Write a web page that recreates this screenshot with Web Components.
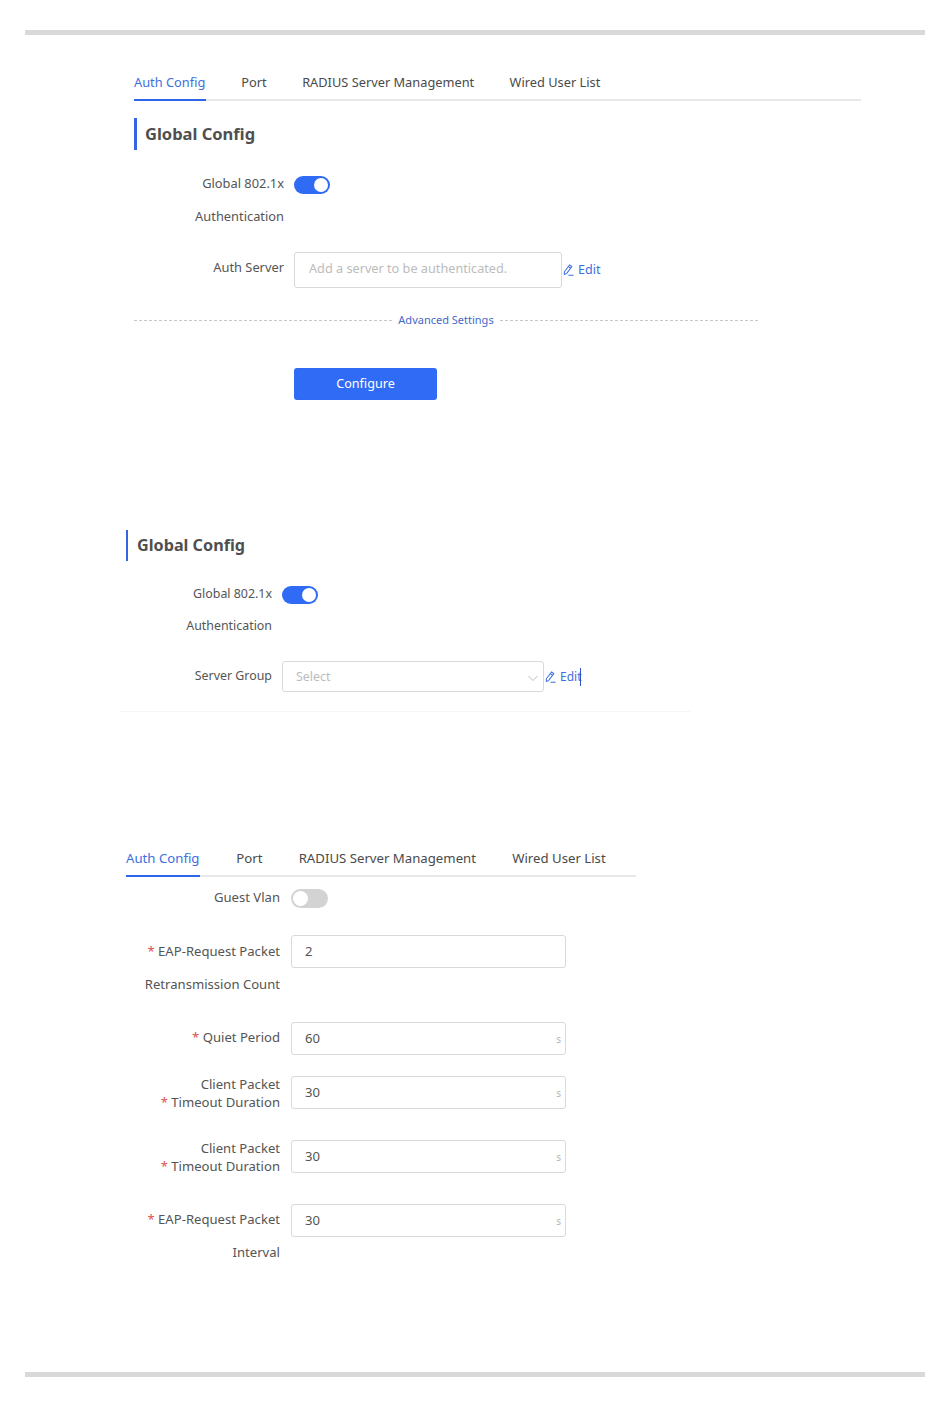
<!DOCTYPE html>
<html>
<head>
<meta charset="utf-8">
<title>802.1x</title>
<style>
  html, body { margin: 0; padding: 0; background: #fff; }
  body {
    width: 950px; height: 1408px; overflow: hidden;
    font-family: "Noto Sans", "Liberation Sans", sans-serif;
    color: #555;
    display: flex; flex-direction: column;
  }
  .first { margin: 33px 89px 0 134px; --fs: 12.85px; --lh: 33px; }
  .second { margin: 130px 0 0 126px; width: 564px; --fs: 12.4px; --lh: 31.5px; }
  .third { margin: 131px 314px 0 126px; --fs: 13.1px; --lh: 33px; }
  .spacer { flex: 1; }
  i { font-style: normal; color: #d9534f; }
</style>
</head>
<body>
<page-rule style="margin-top:30px"></page-rule>

<section class="first">
  <tab-bar><tab-item active>Auth Config</tab-item><tab-item>Port</tab-item><tab-item>RADIUS Server Management</tab-item><tab-item>Wired User List</tab-item></tab-bar>
  <section-title style="margin-top:17px">Global Config</section-title>
  <form-row label-width="150" style="margin-top:17px"><span slot="label">Global 802.1x<br>Authentication</span><toggle-switch on style="margin-top:3px"></toggle-switch></form-row>
  <form-row label-width="150" style="margin-top:19px" centered>
    <span slot="label" style="margin-top:-5px">Auth Server</span>
    <text-box width="268" height="36" placeholder style="padding-bottom:3px;font-size:12.7px">Add a server to be authenticated.</text-box>
    <edit-link style="font-size:12.6px"></edit-link>
  </form-row>
  <fold-divider style="margin-top:23px">Advanced Settings</fold-divider>
  <action-button style="margin:39px 0 0 160px">Configure</action-button>
</section>

<section class="second">
  <section-title bar="2">Global Config</section-title>
  <form-row label-width="146" style="margin-top:17px"><span slot="label">Global 802.1x<br>Authentication</span><toggle-switch on style="margin-top:3px"></toggle-switch></form-row>
  <form-row label-width="146" style="margin-top:20px" centered>
    <span slot="label" style="margin-top:-2px">Server Group</span>
    <text-box width="262" height="31" placeholder chevron style="padding-left:13px;padding-top:2px">Select</text-box>
    <edit-link caret style="font-size:12px"></edit-link>
  </form-row>
  <hr-line style="margin-top:19px"></hr-line>
</section>

<section class="third">
  <tab-bar wide><tab-item active>Auth Config</tab-item><tab-item>Port</tab-item><tab-item>RADIUS Server Management</tab-item><tab-item>Wired User List</tab-item></tab-bar>
  <form-row label-width="154" gap="11" style="margin-top:4px"><span slot="label">Guest Vlan</span><toggle-switch large style="margin-top:2px"></toggle-switch></form-row>
  <form-row label-width="154" gap="11" style="margin-top:21px"><span slot="label"><i>*</i> EAP-Request Packet<br>Retransmission Count</span><text-box width="275" height="33" style="padding-left:13px">2</text-box></form-row>
  <form-row label-width="154" gap="11" style="margin-top:21px"><span slot="label" style="margin-top:-1px"><i>*</i> Quiet Period</span><text-box width="275" height="33" unit="s" style="padding-left:13px">60</text-box></form-row>
  <form-row label-width="154" gap="11" style="margin-top:21px" tight><span slot="label">Client Packet<br><i>*</i> Timeout Duration</span><text-box width="275" height="33" unit="s" style="padding-left:13px">30</text-box></form-row>
  <form-row label-width="154" gap="11" style="margin-top:29px" tight><span slot="label">Client Packet<br><i>*</i> Timeout Duration</span><text-box width="275" height="33" unit="s" style="padding-left:13px">30</text-box></form-row>
  <form-row label-width="154" gap="11" style="margin-top:29px"><span slot="label" style="margin-top:-1px"><i>*</i> EAP-Request Packet<br>Interval</span><text-box width="275" height="33" unit="s" style="padding-left:13px">30</text-box></form-row>
</section>

<div class="spacer"></div>
<page-rule style="margin-bottom:31px"></page-rule>

<script>
function shadow(el, html) {
  el.attachShadow({ mode: 'open' }).innerHTML = html;
}

class PageRule extends HTMLElement {
  constructor() {
    super();
    shadow(this, `<style>:host { display: block; height: 5px; margin-left: 25px; margin-right: 25px; background: #d9d9d9; }</style>`);
  }
}

class TabBar extends HTMLElement {
  constructor() {
    super();
    shadow(this, `<style>
      :host { display: flex; gap: 35.4px; border-bottom: 2px solid #e8e8ea; height: 31px; font-size: 12.8px; --tab-lh: 29px; }
      :host([wide]) { gap: 36.2px; font-size: 13.2px; height: 32px; --tab-lh: 30px; }
    </style><slot></slot>`);
  }
}

class TabItem extends HTMLElement {
  constructor() {
    super();
    shadow(this, `<style>
      :host { display: block; height: 100%; line-height: var(--tab-lh); margin-bottom: -2px; color: #4a4a4a; border-bottom: 2px solid transparent; white-space: nowrap; }
      :host([active]) { color: #3d6fe0; border-bottom-color: #2f66e8; padding-right: 0.7px; }
    </style><slot></slot>`);
  }
}

class SectionTitle extends HTMLElement {
  constructor() {
    super();
    shadow(this, `<style>
      :host { display: block; height: 32px; line-height: 32px; padding-left: 8px; border-left: 3px solid #3565e0; font-size: 16.5px; font-weight: 700; color: #4f4f4f; }
      :host([bar="2"]) { height: 31px; line-height: 31px; border-left-width: 2px; padding-left: 9px; font-size: 16.2px; }
    </style><slot></slot>`);
  }
}

class FormRow extends HTMLElement {
  constructor() {
    super();
    const w = this.getAttribute('label-width') || 150;
    const gap = this.getAttribute('gap') || 10;
    shadow(this, `<style>
      :host { display: flex; gap: ${gap}px; font-size: var(--fs, 13px); line-height: var(--lh, 32px); }
      :host([centered]) { align-items: center; }
      .label { width: ${w}px; flex: none; text-align: right; color: #555; }
      :host([tight]) .label { line-height: 18px; margin-top: -1px; }
      ::slotted(span) { display: block; }
      .control { display: flex; align-items: center; height: var(--lh, 32px); }
      :host([centered]) .control { height: auto; }
    </style>
    <div class="label"><slot name="label"></slot></div>
    <div class="control"><slot></slot></div>`);
  }
}

class ToggleSwitch extends HTMLElement {
  constructor() {
    super();
    shadow(this, `<style>
      :host { display: block; position: relative; width: 36px; height: 18px; border-radius: 9px; background: #d3d3d3; }
      :host([large]) { width: 37px; height: 19px; border-radius: 10px; }
      :host([on]) { background: #2f6bf5; }
      .knob { position: absolute; top: 2px; left: 2px; width: 14px; height: 14px; border-radius: 50%; background: #fff; }
      :host([large]) .knob { width: 15px; height: 15px; }
      :host([on]) .knob { left: 20px; }
    </style><div class="knob"></div>`);
  }
}

class TextBox extends HTMLElement {
  constructor() {
    super();
    const w = this.getAttribute('width');
    const h = this.getAttribute('height');
    const unit = this.getAttribute('unit');
    const chevron = this.hasAttribute('chevron')
      ? `<svg width="12" height="12" viewBox="0 0 12 12" fill="none" stroke="#bdbdbd" stroke-width="1"><path d="M1.5 4l4.5 4.5L10.5 4"/></svg>` : '';
    shadow(this, `<style>
      :host { display: flex; align-items: center; box-sizing: border-box; width: ${w}px; height: ${h}px; padding: 0 4px 0 14px; border: 1px solid #d9d9d9; border-radius: 3px; background: #fff; color: #555; line-height: 1; }
      :host([placeholder]) { color: #bcbcbc; }
      .text { flex: 1; }
      .unit { color: #b5b5b5; font-size: 10px; }
    </style><span class="text"><slot></slot></span>${unit ? `<span class="unit">${unit}</span>` : ''}${chevron}`);
  }
}

class EditLink extends HTMLElement {
  constructor() {
    super();
    shadow(this, `<style>
      :host { display: inline-flex; align-items: center; gap: 4px; margin-left: 1px; position: relative; color: #3d6fe0; line-height: 18px; }
      .caret { display: none; position: absolute; right: 0; top: 0; width: 1px; height: 18px; background: #2b56c8; }
      :host([caret]) .caret { display: block; }
    </style>
    <svg width="11" height="12" viewBox="0 0 11 12" fill="none" stroke="#3d6fe0" stroke-width="1.05"><path d="M6.6 1L8.8 2.6 3.8 9.4 1.4 10.4 1.3 7.8z"/><path d="M5.4 2.6L7.6 4.2M5.4 11.2h5.2"/></svg>
    <span>Edit</span><span class="caret"></span>`);
  }
}

class FoldDivider extends HTMLElement {
  constructor() {
    super();
    shadow(this, `<style>
      :host { display: flex; align-items: center; gap: 6px; width: 624px; height: 18px; color: #4469c9; font-size: 11px; line-height: 16px; white-space: nowrap; }
      i { flex: 1; border-top: 1px dashed #c8c8c8; }
    </style><i></i><slot></slot><i></i>`);
  }
}

class ActionButton extends HTMLElement {
  constructor() {
    super();
    shadow(this, `<style>
      :host { display: flex; align-items: center; justify-content: center; box-sizing: border-box; width: 143px; height: 32px; padding-bottom: 2px; border-radius: 3px; background: #2f6bf5; color: #fff; font-size: 12.6px; }
    </style><slot></slot>`);
  }
}

class HrLine extends HTMLElement {
  constructor() {
    super();
    shadow(this, `<style>:host { display: block; height: 1px; margin-left: -6px; background: #f5f5f5; }</style>`);
  }
}

customElements.define('page-rule', PageRule);
customElements.define('tab-bar', TabBar);
customElements.define('tab-item', TabItem);
customElements.define('section-title', SectionTitle);
customElements.define('form-row', FormRow);
customElements.define('toggle-switch', ToggleSwitch);
customElements.define('text-box', TextBox);
customElements.define('edit-link', EditLink);
customElements.define('fold-divider', FoldDivider);
customElements.define('action-button', ActionButton);
customElements.define('hr-line', HrLine);
</script>
</body>
</html>
